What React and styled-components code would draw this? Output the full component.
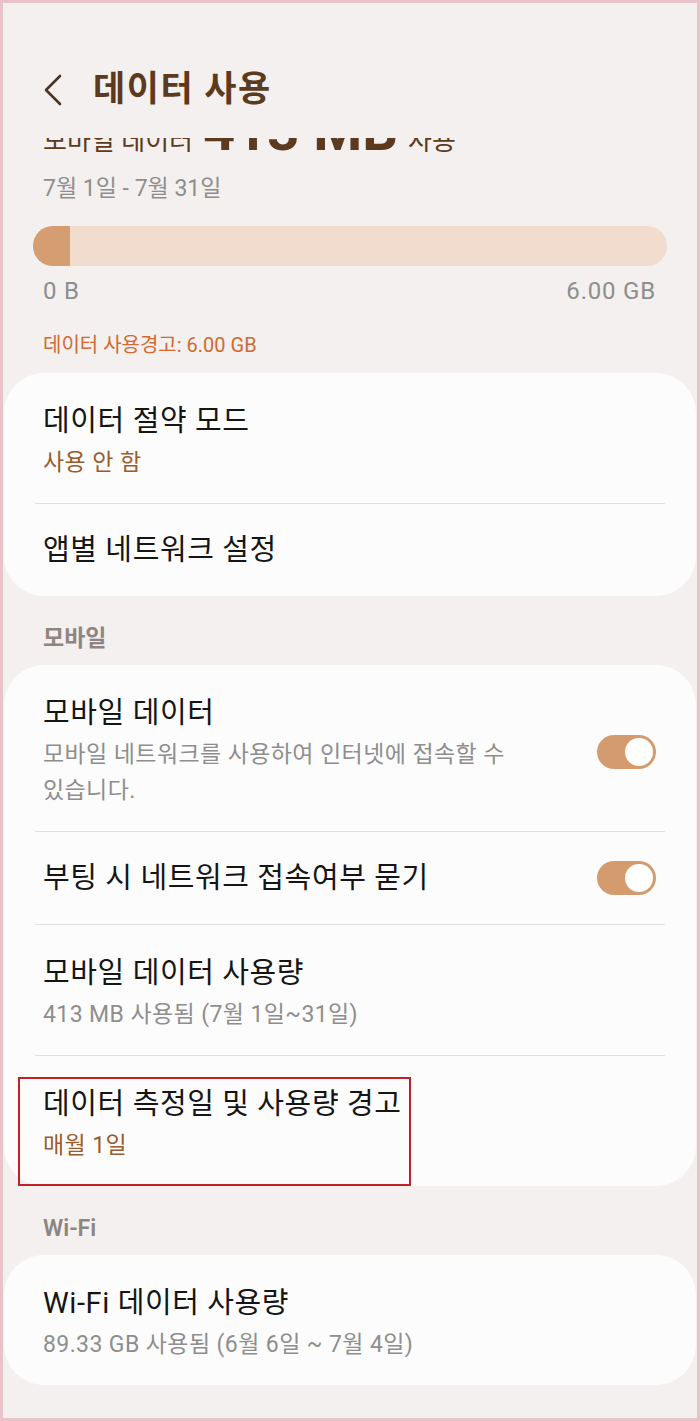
import React from 'react';
import styled, { createGlobalStyle } from 'styled-components';

const GlobalStyle = createGlobalStyle`
  html, body {
    margin: 0;
    padding: 0;
    background: #f4f1f0;
  }
  * {
    box-sizing: border-box;
  }
`;

const font = `Roboto, "Noto Sans CJK KR", "Noto Sans", sans-serif`;

const Frame = styled.div`
  width: 700px;
  height: 1421px;
  border: 3px solid #e8c4ca;
  background: #f3f0ef;
  font-family: ${font};
  overflow: hidden;
`;

const Header = styled.header`
  display: flex;
  align-items: center;
  gap: 31px;
  height: 135px;
  padding: 38px 0 0 39px;
`;

const BackButton = styled.button`
  display: flex;
  align-items: center;
  padding: 0;
  border: 0;
  background: none;
  color: #4b3322;
`;

const Title = styled.h1`
  margin: 0;
  font-family: ${font};
  font-size: 35px;
  line-height: 48px;
  letter-spacing: 1.5px;
  font-weight: 700;
  color: #5b3a20;
`;

const Summary = styled.section`
  padding: 0 30px;
`;

/* the big usage line is scrolled under the app bar, only its lower edge shows */
const ClipLine = styled.div`
  height: 14px;
  overflow: hidden;
  padding-left: 10px;
`;

const SummaryRow = styled.div`
  display: flex;
  align-items: baseline;
  gap: 10px;
  margin-top: -35px;
  line-height: 1;
  color: #5b3a20;
`;

const SummaryText = styled.span`
  font-size: ${p => (p.$big ? '56px' : '26px')};
  font-weight: ${p => (p.$big ? 700 : 400)};
`;

const Period = styled.div`
  margin-top: 22px;
  padding-left: 10px;
  font-size: 23px;
  line-height: 30px;
  color: #8e8e8e;
`;

const UsageBar = styled.div`
  margin-top: 22px;
  height: 40px;
  border-radius: 20px;
  background: #f1dccd;
  overflow: hidden;
`;

const UsageFill = styled.div`
  width: ${p => p.$width}px;
  height: 100%;
  background: #d59d72;
`;

const ScaleRow = styled.div`
  display: flex;
  justify-content: space-between;
  margin-top: 10px;
  padding: 0 11px 0 10px;
  font-size: 24px;
  line-height: 30px;
  letter-spacing: 0.8px;
  color: #8e8e8e;
`;

const Warning = styled.div`
  margin-top: 26px;
  padding-left: 10px;
  font-size: 20px;
  line-height: 26px;
  color: #d2692f;
`;

const Card = styled.div`
  margin: ${p => p.$top || 0}px 1px 0;
  border-radius: 40px;
  background: #fdfcfc;
`;

const Item = styled.div`
  position: relative;
  display: flex;
  align-items: center;
  justify-content: space-between;
  min-height: 92px;
  padding-left: 39px;
  padding-right: 40px;
  padding-top: ${p => (p.$single ? 0 : 29)}px;
  padding-bottom: ${p => (p.$single ? 0 : 22)}px;
`;

const ItemText = styled.div`
  max-width: 480px;
`;

const ItemTitle = styled.div`
  font-size: 29px;
  line-height: 38px;
  letter-spacing: 0.6px;
  color: #151515;
`;

const ItemSub = styled.div`
  margin-top: 5px;
  font-size: 23px;
  line-height: 36px;
  letter-spacing: 0.4px;
  color: ${p => (p.$accent ? '#9a5c2c' : '#8e8e8e')};
`;

const Divider = styled.div`
  height: 1px;
  margin: 0 31px;
  background: #e3dfde;
`;

const Toggle = styled.div`
  display: flex;
  justify-content: flex-end;
  align-items: center;
  flex: none;
  width: 59px;
  height: 34px;
  padding: 3px;
  border-radius: 17px;
  background: #d49b6e;

  &::after {
    content: '';
    width: 28px;
    height: 28px;
    border-radius: 50%;
    background: #ffffff;
  }
`;

const SectionLabel = styled.div`
  margin: 28px 0 11px;
  padding-left: 40px;
  font-size: 23px;
  line-height: 30px;
  font-weight: 600;
  color: #8f8580;
`;

const Highlight = styled.div`
  position: absolute;
  left: 14px;
  top: 21px;
  width: 393px;
  height: 109px;
  border: 2px solid #c32027;
  pointer-events: none;
`;

const Setting = ({ title, sub, accent, toggle, children }) => (
  <Item $single={!sub}>
    <ItemText>
      <ItemTitle>{title}</ItemTitle>
      {sub && <ItemSub $accent={accent}>{sub}</ItemSub>}
    </ItemText>
    {toggle && <Toggle />}
    {children}
  </Item>
);

export default function App() {
  return (
    <>
      <GlobalStyle />
      <Frame>
        <Header>
          <BackButton>
            <svg width="20" height="32" viewBox="0 0 20 32" fill="none">
              <path d="M18 2 L4 16 L18 30" stroke="currentColor" strokeWidth="2.6" strokeLinecap="round" strokeLinejoin="round" />
            </svg>
          </BackButton>
          <Title>데이터 사용</Title>
        </Header>

        <Summary>
          <ClipLine>
            <SummaryRow>
              <SummaryText>모바일 데이터</SummaryText>
              <SummaryText $big>413 MB</SummaryText>
              <SummaryText>사용</SummaryText>
            </SummaryRow>
          </ClipLine>
          <Period>7월 1일 - 7월 31일</Period>
          <UsageBar>
            <UsageFill $width={37} />
          </UsageBar>
          <ScaleRow>
            <span>0 B</span>
            <span>6.00 GB</span>
          </ScaleRow>
          <Warning>데이터 사용경고: 6.00 GB</Warning>
        </Summary>

        <Card $top={15}>
          <Setting title="데이터 절약 모드" sub="사용 안 함" accent />
          <Divider />
          <Setting title="앱별 네트워크 설정" />
        </Card>

        <SectionLabel>모바일</SectionLabel>
        <Card>
          <Setting title="모바일 데이터" sub="모바일 네트워크를 사용하여 인터넷에 접속할 수 있습니다." toggle />
          <Divider />
          <Setting title="부팅 시 네트워크 접속여부 묻기" toggle />
          <Divider />
          <Setting title="모바일 데이터 사용량" sub="413 MB 사용됨 (7월 1일~31일)" />
          <Divider />
          <Setting title="데이터 측정일 및 사용량 경고" sub="매월 1일" accent>
            <Highlight />
          </Setting>
        </Card>

        <SectionLabel>Wi-Fi</SectionLabel>
        <Card>
          <Setting title="Wi-Fi 데이터 사용량" sub="89.33 GB 사용됨 (6월 6일 ~ 7월 4일)" />
        </Card>
      </Frame>
    </>
  );
}
